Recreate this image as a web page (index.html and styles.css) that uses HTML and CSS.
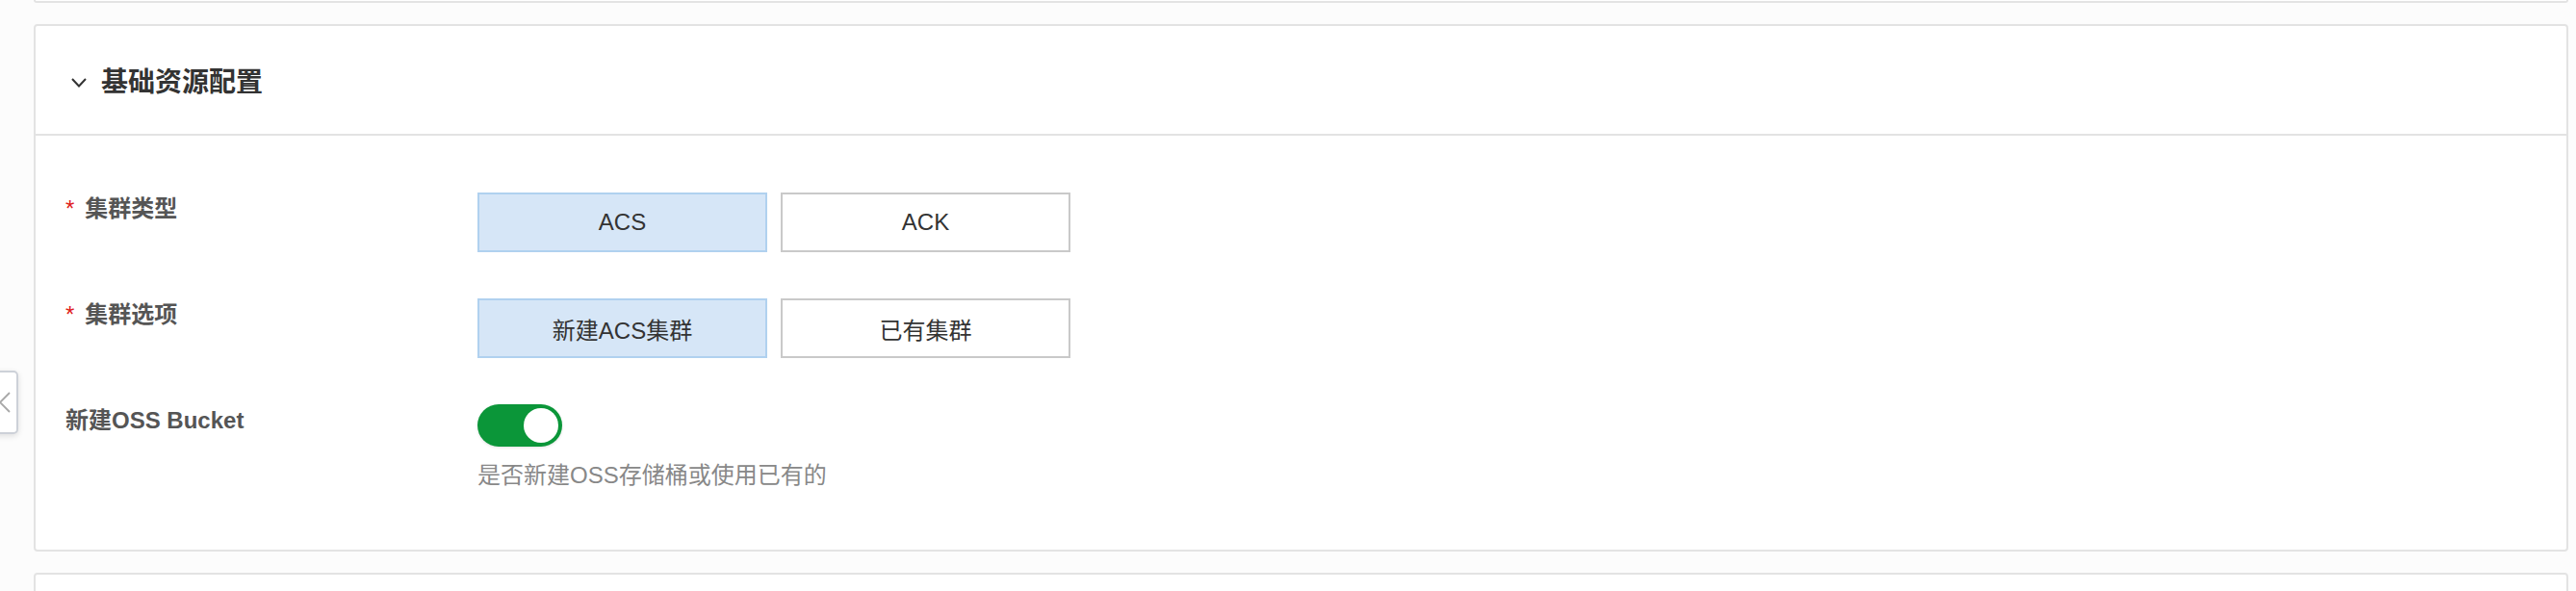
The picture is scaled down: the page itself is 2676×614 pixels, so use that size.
FILE: index.html
```html
<!DOCTYPE html>
<html lang="zh-CN">
<head>
<meta charset="utf-8">
<title>基础资源配置</title>
<link rel="stylesheet" href="styles.css">
</head>
<body>
<div class="page">
  <div class="card stub"></div>

  <section class="card">
    <header class="card-head">
      <svg class="chev" width="16" height="10" viewBox="0 0 16 10"><path d="M1 1 L8 8.5 L15 1" fill="none" stroke="#333" stroke-width="2"/></svg>
      <h2 class="card-title">基础资源配置</h2>
    </header>
    <div class="card-body">
      <div class="form-item">
        <div class="label"><span class="req">*</span>集群类型</div>
        <div class="control">
          <div class="seg">
            <button class="seg-btn active">ACS</button>
            <button class="seg-btn">ACK</button>
          </div>
        </div>
      </div>
      <div class="form-item">
        <div class="label"><span class="req">*</span>集群选项</div>
        <div class="control">
          <div class="seg">
            <button class="seg-btn active">新建ACS集群</button>
            <button class="seg-btn">已有集群</button>
          </div>
        </div>
      </div>
      <div class="form-item last">
        <div class="label">新建OSS Bucket</div>
        <div class="control">
          <div class="switch on"><span class="knob"></span></div>
          <div class="help">是否新建OSS存储桶或使用已有的</div>
        </div>
      </div>
    </div>
  </section>

  <div class="card next"></div>
</div>

<div class="side-tab">
  <svg width="14" height="24" viewBox="0 0 14 24"><path d="M12 2 L2 12 L12 22" fill="none" stroke="#a8a8a8" stroke-width="1.8"/></svg>
</div>
</body>
</html>
```

FILE: styles.css
```css
* { box-sizing: border-box; }
html, body { margin: 0; padding: 0; }
body {
  background: #fcfcfc;
  font-family: "Liberation Sans", "Noto Sans CJK SC", sans-serif;
  color: #333;
  overflow: hidden;
  height: 614px;
}
.page {
  padding: 0 8px 0 35px;
  display: flex;
  flex-direction: column;
  gap: 22px;
}
.card {
  background: #fff;
  border: 2px solid #e3e3e3;
  border-radius: 4px;
}
.card.stub {
  height: 3px;
  border-top: none;
  border-radius: 0 0 4px 4px;
}
.card.next {
  height: 120px;
}
.card-head {
  height: 114px;
  border-bottom: 2px solid #e3e3e3;
  display: flex;
  align-items: center;
  padding: 6px 0 0 37px;
}
.chev { display: block; margin-right: 15px; }
.card-title {
  margin: 0;
  font-size: 28px;
  font-weight: bold;
  line-height: 34px;
  color: #333;
}
.card-body {
  padding: 59px 0 60px 31px;
}
.form-item {
  display: flex;
  align-items: flex-start;
  margin-bottom: 48px;
}
.form-item.last { margin-bottom: 0; }
.label {
  width: 428px;
  flex: none;
  font-size: 24px;
  line-height: 34px;
  font-weight: bold;
  color: #555;
}
.req {
  color: #e0201b;
  margin-right: 11px;
  font-weight: normal;
}
.control { display: flex; flex-direction: column; align-items: flex-start; }
.seg { display: flex; gap: 14px; }
.seg-btn {
  width: 301px;
  height: 62px;
  border: 2px solid #c9c9c9;
  background: #fff;
  font-family: "Liberation Sans", "Noto Sans CJK SC", sans-serif;
  font-size: 24px;
  color: #333;
  padding: 0;
  border-radius: 0;
}
.seg-btn.active {
  background: #d6e6f7;
  border-color: #b0d1ef;
}
.switch {
  width: 88px;
  height: 44px;
  border-radius: 22px;
  background: #0b9639;
  display: flex;
  align-items: center;
  justify-content: flex-end;
  padding: 0 4px;
  box-shadow: 0 1px 3px rgba(0,0,0,0.12);
}
.knob {
  width: 36px;
  height: 36px;
  border-radius: 50%;
  background: #fff;
}
.help {
  margin-top: 13px;
  font-size: 24px;
  line-height: 34px;
  color: #888;
}
.side-tab {
  position: absolute;
  left: -22px;
  top: 385px;
  width: 41px;
  height: 66px;
  background: #fff;
  border: 2px solid #cdd1d8;
  border-radius: 5px;
  box-shadow: 0 2px 6px rgba(0,0,0,0.12);
  display: flex;
  align-items: center;
  padding-left: 18px;
}
.side-tab svg { display: block; }
```
